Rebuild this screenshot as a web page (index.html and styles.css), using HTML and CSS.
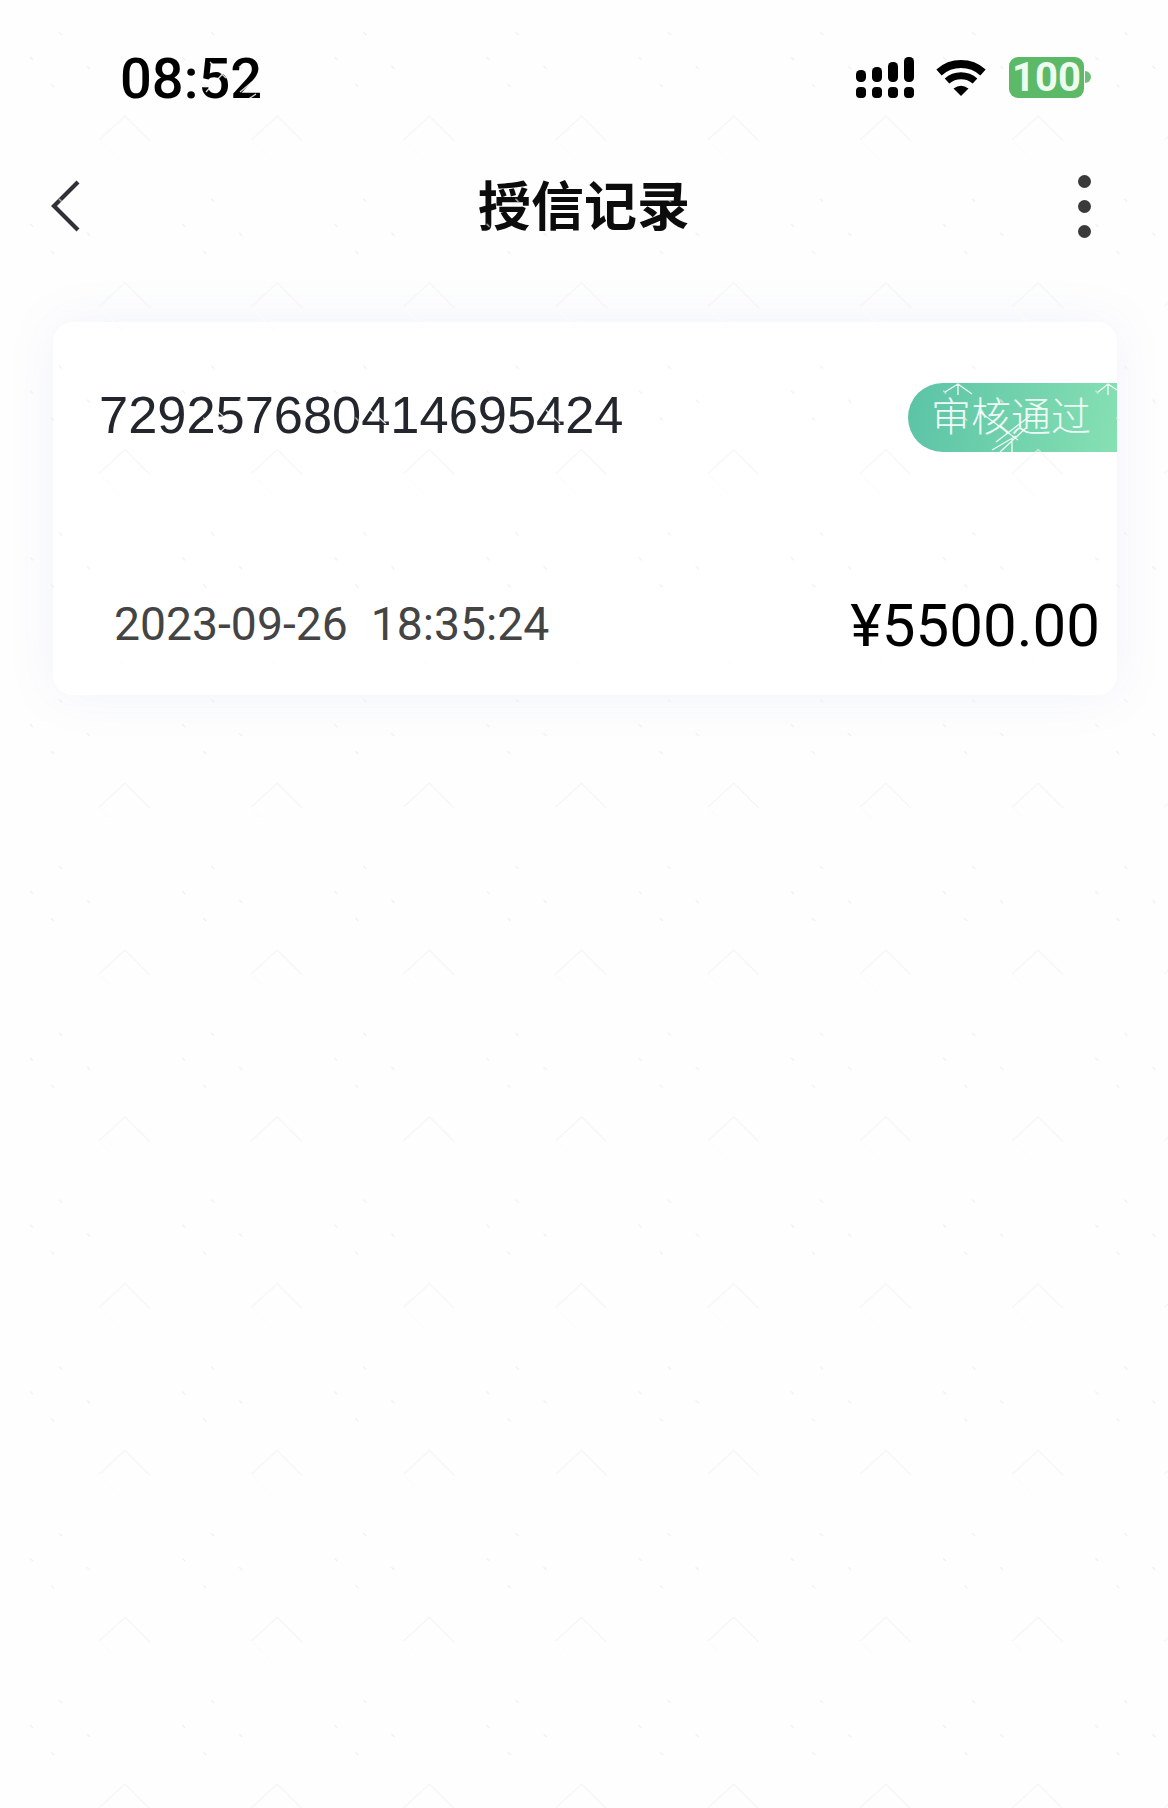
FILE: index.html
```html
<!DOCTYPE html>
<html lang="zh">
<head>
<meta charset="utf-8">
<title>授信记录</title>
<link rel="stylesheet" href="styles.css">
</head>
<body>
<div class="page">
  <header class="status">
    <span class="time">08:52</span>
    <div class="status-icons">
      <svg class="signal" width="58" height="41" viewBox="0 0 58 41" aria-hidden="true">
        <rect x="0" y="13" width="10" height="12" rx="4.5"/><rect x="16" y="10" width="10" height="15" rx="4.5"/><rect x="32" y="5" width="10" height="20" rx="4.5"/><rect x="48" y="0" width="10" height="25" rx="4.5"/>
        <rect x="0" y="30" width="10" height="11" rx="4"/><rect x="16" y="30" width="10" height="11" rx="4"/><rect x="32" y="30" width="10" height="11" rx="4"/><rect x="48" y="30" width="10" height="11" rx="4"/>
      </svg>
      <svg class="wifi" width="50" height="37" viewBox="0 0 50 37" aria-hidden="true">
        <path d="M3 13.5A33 33 0 0 1 47 13.5" fill="none" stroke="#000" stroke-width="8"/>
        <path d="M11 22A21 21 0 0 1 39 22" fill="none" stroke="#000" stroke-width="7"/>
        <path d="M25 37L17.5 29.5Q25 24 32.5 29.5Z"/>
      </svg>
      <div class="battery"><span class="battery-body">100</span><span class="battery-nub"></span></div>
    </div>
  </header>

  <nav class="navbar">
    <svg class="back" width="30" height="52" viewBox="0 0 30 52" aria-hidden="true">
      <path d="M27 2L3 26L27 50" fill="none" stroke="#2f3136" stroke-width="4.2"/>
    </svg>
    <h1 class="title">授信记录</h1>
    <div class="more"><i></i><i></i><i></i></div>
  </nav>

  <section class="card">
    <div class="card-top">
      <span class="number">729257680414695424</span>
      <span class="badge">审核通过</span>
    </div>
    <div class="card-bottom">
      <span class="date">2023-09-26  18:35:24</span>
      <span class="amount">¥5500.00</span>
    </div>
  </section>

  <svg class="watermark" width="1168" height="1808" aria-hidden="true">
    <defs>
      <pattern id="wm" patternUnits="userSpaceOnUse" width="152.2" height="166.8">
        <path d="M99 140L125 116L150 141" fill="none" stroke="#f3f3f3" stroke-width="1"/>
        <path d="M100 141L124 165" fill="none" stroke="#fcfcfc" stroke-width="1"/>
        <path d="M59 32L62 35M30 57L33 60M87 66L90 69M51 84L54 87" fill="none" stroke="#ececec" stroke-width="1"/>
      </pattern>
    </defs>
    <rect width="1168" height="590" fill="url(#wm)"/>
    <rect y="660" width="1168" height="1148" fill="url(#wm)"/>
    <g class="scratches">
      <path d="M210 62L226 78M228 68L206 92M240 92L252 82M247 100L256 94"/>
      <path d="M958 384V395M945 392L958 384L972 394M1108 384V395M1098 392L1108 384L1117 390"/>
      <path d="M980 412L1018 440M996 442L1030 416M992 450L1016 436M1000 452L1026 428M1012 438V452"/>
      <path d="M216 410L232 424M368 408L386 424M546 410L560 424M220 432L236 418"/>
    </g>
  </svg>
</div>
</body>
</html>
```
FILE: styles.css
```css
* { box-sizing: border-box; }
html, body { margin: 0; padding: 0; background: #fff; }
.page {
  position: relative;
  width: 1168px;
  height: 1808px;
  overflow: hidden;
  background: #fefefe;
  font-family: "Liberation Sans", Arial, "Noto Sans CJK SC", sans-serif;
}
.status {
  height: 136px;
  padding: 18px 77px 0 120px;
  display: flex;
  align-items: center;
  justify-content: space-between;
}
.time { font-family: Roboto, sans-serif; font-size: 56px; font-weight: 500; line-height: 1; color: #000; margin-top: 3px; }
.status-icons { display: flex; align-items: center; gap: 22px; }
.wifi { margin-right: 1px; }
.battery { display: flex; align-items: center; }
.battery-body {
  width: 75px;
  height: 41px;
  border-radius: 9px;
  background: #5cb968;
  color: #eefcf0;
  font-family: Roboto, sans-serif;
  font-size: 40px;
  font-weight: 700;
  line-height: 41px;
  text-align: center;
}
.battery-nub {
  width: 6px;
  height: 12px;
  margin-left: 1px;
  border-radius: 0 6px 6px 0;
  background: #6cc078;
}
.navbar {
  height: 140px;
  padding: 0 51px;
  display: grid;
  grid-template-columns: 1fr auto 1fr;
  align-items: center;
}
.title {
  margin: -6px 0 0;
  font-family: "Noto Sans CJK SC", sans-serif;
  font-size: 53px;
  font-weight: 700;
  line-height: 1;
  color: #0c0c0c;
}
.more { justify-self: end; margin-right: 26px; display: flex; flex-direction: column; gap: 12px; }
.more i { display: block; width: 13px; height: 13px; border-radius: 50%; background: #3a3a3a; }
.card {
  margin: 46px 51px 0 53px;
  height: 373px;
  padding: 61px 0 39px;
  background: #fff;
  border-radius: 20px;
  box-shadow: 0 0 50px rgba(110, 130, 220, 0.09);
  display: flex;
  flex-direction: column;
  justify-content: space-between;
}
.card-top { display: flex; align-items: center; justify-content: space-between; padding-left: 46px; }
.number { font-size: 52.4px; line-height: 1; color: #23262d; margin-top: -4px; }
.badge {
  width: 209px;
  height: 69px;
  padding-left: 23px;
  border-radius: 35px 0 0 35px;
  background: linear-gradient(100deg, #5bc3a6, #86e0b3);
  color: #eefbf6;
  font-family: "Noto Sans CJK SC", sans-serif;
  font-size: 40px;
  font-weight: 300;
  line-height: 62px;
  white-space: nowrap;
}
.card-bottom { display: flex; align-items: center; justify-content: space-between; padding: 0 17px 0 61px; }
.date { font-family: Roboto, sans-serif; font-size: 46.3px; line-height: 1; color: #444; white-space: pre; margin-bottom: 4px; }
.amount { font-family: Roboto, sans-serif; font-size: 60px; line-height: 1; color: #000; }
.watermark { position: absolute; left: 0; top: 0; pointer-events: none; }
.scratches path { fill: none; stroke: #fff; stroke-width: 1.4; opacity: .85; }
```
